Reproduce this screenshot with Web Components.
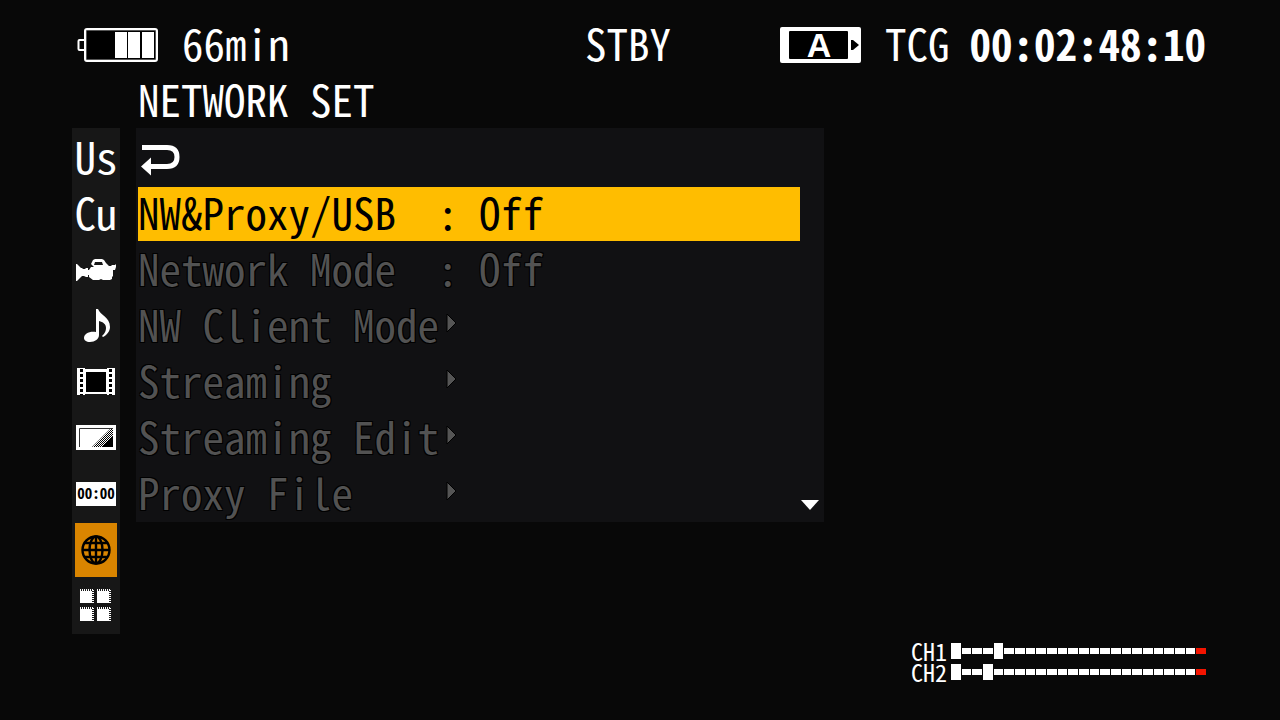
<!DOCTYPE html>
<html lang="en">
<head>
<meta charset="utf-8">
<title>Network Set</title>
<style>
  html { background: #080808; }
  body { margin: 0; }
</style>
</head>
<body>
<camera-screen></camera-screen>
<script>
const define = (name, html, setup) => {
  const template = document.createElement('template');
  template.innerHTML = html;
  customElements.define(name, class extends HTMLElement {
    constructor() {
      super();
      this.attachShadow({ mode: 'open' }).append(template.content.cloneNode(true));
    }
    connectedCallback() { if (setup) setup(this, this.shadowRoot); }
  });
};

/* Battery gauge: three of four segments filled */
define('battery-gauge', `
<style>
  :host { display: flex; align-items: center; gap: 24px; }
  svg { display: block; margin-top: 6px; }
</style>
<svg width="81" height="34" viewBox="0 0 81 34" aria-hidden="true">
  <rect x="1.5" y="12" width="7" height="10" rx="1" fill="#080808" stroke="#fff" stroke-width="2"/>
  <rect x="8" y="1" width="72" height="32" rx="2" fill="#555" stroke="#fff" stroke-width="2"/>
  <path fill="#000" d="M10 3h68v28H10z"/>
  <path fill="#fff" d="M38 4h12v26H38zM51 4h12v26H51zM65 4h12v26H65z"/>
  <path d="M78.500 3v28" stroke="#555"/>
</svg>
<slot></slot>`);

/* Memory card slot with its letter */
define('card-slot', `
<style>:host { display: block; } svg { display: block; margin-top: 6px; }</style>
<svg width="81" height="36" viewBox="0 0 81 36" role="img">
  <rect width="81" height="36" rx="2" fill="#fff"/>
  <rect x="9" y="4" width="59" height="28" rx="1" fill="#000"/>
  <path d="M71 13h2l6 5-6 5h-2z" fill="#000"/>
  <text x="39" y="30" text-anchor="middle" fill="#fff" font-family="Liberation Sans, Arial, sans-serif" font-weight="700" font-size="34">A</text>
</svg>`);

define('status-bar', `
<style>
  :host { display: grid; grid-template-columns: 1fr auto 1fr; align-items: center; padding: 0 74px 0 50px; height: 56px; }
  .left { padding-left: 27px; }
  .right { display: flex; justify-content: flex-end; align-items: center; gap: 24px; }
</style>
<div class="left"><slot name="power"></slot></div>
<slot name="state"></slot>
<div class="right"><slot name="time"></slot></div>`);

/* Category tab in the side bar */
define('side-tab', `
<style>
  :host { display: block; height: 56px; box-sizing: border-box; }
  button { display: flex; align-items: center; justify-content: center; box-sizing: border-box; width: 100%; height: 100%;
    margin: 0; padding: 0; border: 0; background: none; color: #fff; font: inherit; font-feature-settings: inherit; line-height: 50px; }
  :host([text]) button { padding-bottom: 6px; }
  :host([selected]) { padding: 1px 3px; }
  :host([selected]) button { background: #da8500; }
</style>
<button type="button"><slot></slot></button>`, (host, root) => {
  root.querySelector('button').setAttribute('aria-label', host.getAttribute('label'));
});

const icons = {
  camera: `<path fill="#fff" fill-rule="evenodd" d="M4 22l1 0 4 4h1l1 1h2l1-1h2v2h1l2-3h3l-3-3 2-4 2-1h7l2 1 2 3 3 3h2l1-1h3l1-1v3l-1 3h-2v6l-1 1v2l-2 1h-7l-2-1-2 1h-6l-4-3v-2h-1v2h-2l-2-1h-2l-1 1-4 4H4zM23 20l-1 3h9l-1-3z"/>`,
  note: `<path fill="#fff" d="M24 11h2c2 6 12 8 12 18 0 4-3 8-7 10l-1-1c3-3 4-5 4-8 0-4-3-6-7-7v14c0 4-4 7-9 7-4 0-6-2-6-4 0-4 5-7 12-6z"/>`,
  film: `<path fill="#fff" d="M5 14h38v27H5z"/><path fill="#000" d="M14 18h20v20H14z"/>
    <path stroke="#000" stroke-width="3" stroke-dasharray="3 2" d="M9.500 15v26M38.500 15v26"/>
    <path fill="#171717" d="M13 14h22v1H13zM13 40h22v1H13z"/>`,
  paint: `<defs><pattern id="h" width="2" height="2" patternUnits="userSpaceOnUse"><path fill="#000" d="M0 0h1v1H0zM1 1h1v1H1z"/></pattern></defs>
    <path fill="#fff" d="M4 15h40v25H4z"/><path fill="none" stroke="#333" d="M7.500 37V18.500H41"/>
    <path fill="url(#h)" d="M20 37l18-18h3v18z"/><path fill="#000" d="M30 37l11-11v11z"/>`,
  globe: `<g fill="none" stroke="#000" stroke-width="2.400"><circle cx="21" cy="27" r="13.500"/><ellipse cx="21" cy="27" rx="6.500" ry="13.500"/>
    <path d="M21 13v28M7 27h28M9 20h24M9 34h24"/></g>`,
  grid: `<path fill="#fff" d="M8 12h13v13H8zM25 12h13v13H25zM8 30h13v13H8zM25 30h13v13H25z"/>
    <path fill="none" stroke="#fff" stroke-dasharray="1 1" d="M8 11.500h14M25 11.500h14M8 29.500h14M25 29.500h14M21.500 12v13M38.500 12v13M21.500 30v13M38.500 30v13"/>
    <path fill="none" stroke="#171717" stroke-dasharray="1 1" d="M9 12.500h12M26 12.500h12M9 30.500h12M26 30.500h12M20.500 13v12M37.500 13v12M20.500 31v12M37.500 31v12"/>`
};
define('tab-icon', `
<style>:host { display: block; } svg { display: block; }</style>`, (host, root) => {
  const w = host.getAttribute('name') === 'globe' ? 42 : 48, h = w === 42 ? 54 : 56;
  root.innerHTML += `<svg width="${w}" height="${h}" viewBox="0 0 ${w} ${h}" aria-hidden="true">${icons[host.getAttribute('name')]}</svg>`;
});

define('time-badge', `
<style>
  :host { display: block; box-sizing: border-box; width: 40px; height: 24px; background: #fff; color: #000;
    font-size: 15px; font-weight: 700; line-height: 22px; text-align: center; }
</style><slot></slot>`);

define('side-bar', `
<style>:host { display: block; background: #171717; padding-top: 2px; }</style>
<slot></slot>`);

/* Menu line: label, then a value or a submenu arrow */
define('menu-row', `
<style>
  :host { display: block; box-sizing: border-box; height: 56px; padding: 1px 0; }
  button { display: grid; grid-template-columns: 299px 42px 1fr; align-items: center; box-sizing: border-box;
    width: 100%; height: 54px; margin: 0; padding: 0 0 6px; border: 0; background: none; text-align: left; white-space: nowrap;
    color: #525252; font: inherit; font-feature-settings: inherit; line-height: 48px;
    text-shadow: 1px 1px #000, -1px -1px #000, 1px -1px #000, -1px 1px #000; }
  :host([selected]) button { background: #ffbd00; color: #000; text-shadow: none; }
  svg { display: none; margin-left: 9px; }
  :host([submenu]) svg { display: block; }
  :host([submenu]) .colon, :host([back]) .colon { display: none; }
</style>
<button type="button">
  <span><slot></slot></span>
  <span class="colon">:</span>
  <svg width="11" height="20" viewBox="0 0 11 20" aria-hidden="true"><path fill="#555" stroke="#000" d="M1 1l9 9-9 9z"/></svg>
  <slot name="value"></slot>
</button>`, (host, root) => {
  const button = root.querySelector('button');
  button.disabled = host.hasAttribute('disabled');
  if (host.hasAttribute('back')) button.setAttribute('aria-label', 'Back');
});

define('back-icon', `
<style>:host { display: block; } svg { display: block; }</style>
<svg width="44" height="48" viewBox="0 0 44 48" aria-hidden="true">
  <path fill="none" stroke="#fff" stroke-width="5" d="M4 16.500h25q10 0 10 9.500T29 35.500H10"/>
  <path fill="#fff" d="M3 35.500l10-9v18z"/>
</svg>`);

define('menu-panel', `
<style>
  :host { display: grid; grid-template-columns: 1fr 24px; background: #111113; padding: 2px 0 0 2px; }
  .more { align-self: end; margin: 0; padding: 0 0 11px 1px; border: 0; background: none; }
  svg { display: block; }
</style>
<div><slot></slot></div>
<button class="more" type="button" aria-label="More items">
  <svg width="18" height="12" viewBox="0 0 18 12"><path fill="#fff" d="M0 1h18l-9 10z"/></svg>
</button>`);

/* Audio level meter: 24 cells, thumb cells drawn tall, last one red */
define('level-meter', `
<style>
  :host { display: flex; align-items: center; gap: 4px; height: 21px; font-size: 24px; line-height: 18px; }
  .bar { display: flex; align-items: center; gap: 1px; width: 255px; }
  i { flex: 1; height: 6px; background: #fff; }
  i.tall { height: 16px; }
  i:last-child { background: #f31400; }
</style>
<slot></slot><div class="bar"></div>`, (host, root) => {
  const bar = root.querySelector('.bar');
  for (let n = 0; n < 24; n++) {
    const cell = document.createElement('i');
    if (n === 0 || n === Number(host.getAttribute('level'))) cell.className = 'tall';
    bar.append(cell);
  }
});

define('camera-screen', `
<style>
  :host { display: flex; flex-direction: column; box-sizing: border-box; min-height: 100vh; padding: 14px 0 38px;
    background: #080808; color: #fff; font: 43px/56px "Noto Sans CJK JP", "Liberation Mono", monospace;
    font-feature-settings: "hwid" 1; font-variant-ligatures: none; white-space: nowrap; }
  h1 { margin: 0; padding-left: 138px; font: inherit; font-feature-settings: inherit; }
  main { display: grid; grid-template-columns: 48px minmax(0, 688px); gap: 16px; align-items: start; padding: 2px 72px 0; }
  .clock { font-weight: 700; }
  .tcg { margin-right: -4px; }
  footer { display: flex; flex-direction: column; align-items: flex-end; margin-top: auto; padding-right: 74px; }
</style>
<status-bar>
  <battery-gauge slot="power">66min</battery-gauge>
  <span slot="state">STBY</span>
  <card-slot slot="time"></card-slot>
  <span slot="time" class="tcg">TCG</span>
  <span slot="time" class="clock">00:02:48:10</span>
</status-bar>
<h1>NETWORK SET</h1>
<main>
  <side-bar>
    <side-tab text label="User">Us</side-tab>
    <side-tab text label="Custom">Cu</side-tab>
    <side-tab label="Camera"><tab-icon name="camera"></tab-icon></side-tab>
    <side-tab label="Audio"><tab-icon name="note"></tab-icon></side-tab>
    <side-tab label="Video"><tab-icon name="film"></tab-icon></side-tab>
    <side-tab label="Display"><tab-icon name="paint"></tab-icon></side-tab>
    <side-tab label="Timecode"><time-badge>00:00</time-badge></side-tab>
    <side-tab label="Network" selected><tab-icon name="globe"></tab-icon></side-tab>
    <side-tab label="Others"><tab-icon name="grid"></tab-icon></side-tab>
  </side-bar>
  <menu-panel>
    <menu-row back><back-icon></back-icon></menu-row>
    <menu-row selected>NW&amp;Proxy/USB<span slot="value">Off</span></menu-row>
    <menu-row disabled>Network Mode<span slot="value">Off</span></menu-row>
    <menu-row disabled submenu>NW Client Mode</menu-row>
    <menu-row disabled submenu>Streaming</menu-row>
    <menu-row disabled submenu>Streaming Edit</menu-row>
    <menu-row disabled submenu>Proxy File</menu-row>
  </menu-panel>
</main>
<footer>
  <level-meter level="4">CH1</level-meter>
  <level-meter level="3">CH2</level-meter>
</footer>`);
</script>
</body>
</html>
